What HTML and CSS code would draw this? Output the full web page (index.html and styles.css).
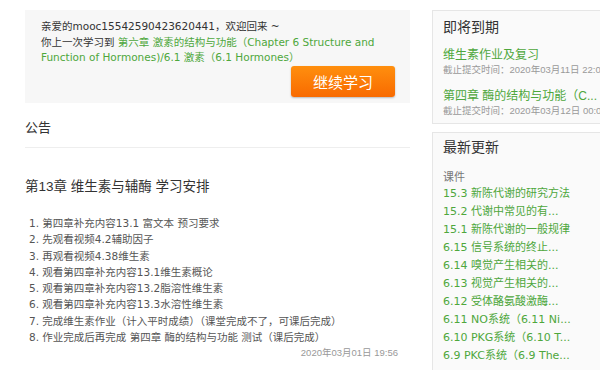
FILE: index.html
```html
<!DOCTYPE html>
<html lang="zh-CN">
<head>
    <meta charset="UTF-8">
    <meta name="viewport" content="width=device-width, initial-scale=1.0">
    <title>课程公告</title>
    <link rel="stylesheet" href="styles.css">
</head>
<body>

    <div class="page">
        <!-- 主栏 -->
        <div class="main">
            <div class="welcome">
                <p class="hello">亲爱的mooc15542590423620441，欢迎回来 ~</p>
                <p class="last">你上一次学习到 <a href="#">第六章 激素的结构与功能（Chapter 6 Structure and Function of Hormones)/6.1 激素（6.1 Hormones）</a></p>
                <button class="continue" type="button">继续学习</button>
            </div>

            <h3 class="section-title">公告</h3>

            <div class="notice">
                <h2>第13章 维生素与辅酶 学习安排</h2>
                <ol class="steps">
                    <li>1. 第四章补充内容13.1 富文本 预习要求</li>
                    <li>2. 先观看视频4.2辅助因子</li>
                    <li>3. 再观看视频4.38维生素</li>
                    <li>4. 观看第四章补充内容13.1维生素概论</li>
                    <li>5. 观看第四章补充内容13.2脂溶性维生素</li>
                    <li>6. 观看第四章补充内容13.3水溶性维生素</li>
                    <li>7. 完成维生素作业（计入平时成绩）（课堂完成不了，可课后完成）</li>
                    <li>8. 作业完成后再完成 第四章 酶的结构与功能 测试（课后完成）</li>
                </ol>
                <div class="date">2020年03月01日 19:56</div>
            </div>
        </div>

        <!-- 侧栏 -->
        <div class="side">
            <div class="box">
                <h4>即将到期</h4>
                <div class="due">
                    <a href="#">维生素作业及复习</a>
                    <span>截止提交时间：2020年03月11日 22:00</span>
                </div>
                <div class="due">
                    <a href="#">第四章 酶的结构与功能（C...</a>
                    <span>截止提交时间：2020年03月12日 00:00</span>
                </div>
            </div>

            <div class="box updates">
                <h4>最新更新</h4>
                <div class="kind">课件</div>
                <ul class="update-list">
                    <li><a href="#">15.3 新陈代谢的研究方法</a></li>
                    <li><a href="#">15.2 代谢中常见的有...</a></li>
                    <li><a href="#">15.1 新陈代谢的一般规律</a></li>
                    <li><a href="#">6.15 信号系统的终止...</a></li>
                    <li><a href="#">6.14 嗅觉产生相关的...</a></li>
                    <li><a href="#">6.13 视觉产生相关的...</a></li>
                    <li><a href="#">6.12 受体酪氨酸激酶...</a></li>
                    <li><a href="#">6.11 NO系统（6.11 Ni...</a></li>
                    <li><a href="#">6.10 PKG系统（6.10 T...</a></li>
                    <li><a href="#">6.9 PKC系统（6.9 The...</a></li>
                </ul>
            </div>
        </div>
    </div>

</body>
</html>
```

FILE: styles.css
```css
/* 基本样式 */
body {
    margin: 0;
    font-family: "Liberation Sans", "Noto Sans CJK SC", sans-serif;
    color: #333;
    background: #fff;
    overflow: hidden;
}

a {
    color: #4ea73c; /* 绿色链接 */
    text-decoration: none;
}

p, h2, h3, h4, ol, ul {
    margin: 0;
    padding: 0;
}

.page {
    display: flex;
    gap: 22px;
    padding: 10px 0 0 25px;
}

/* 主栏 */
.main {
    width: 385px;
    flex-shrink: 0;
}

.welcome {
    display: flex;
    flex-direction: column;
    background: #f7f7f7;
    padding: 7px 15px 6px 16px;
    font-family: "DejaVu Sans", "Noto Sans CJK SC", sans-serif;
    font-size: 10.5px;
}

.welcome .hello {
    line-height: 18px;
}

.welcome .last {
    line-height: 15px;
}

.continue {
    align-self: flex-end;
    width: 104px;
    height: 31px;
    margin-top: 1px;
    border: none;
    border-radius: 3px;
    background: linear-gradient(#ff8f0e, #f86a00);
    box-shadow: 0 1px 2px rgba(0, 0, 0, 0.25);
    color: #fff;
    font-family: "Liberation Sans", "Noto Sans CJK SC", sans-serif;
    font-size: 15px;
    cursor: pointer;
}

.section-title {
    margin-top: 18px;
    padding-bottom: 12px;
    border-bottom: 1px solid #eee;
    font-size: 13px;
    font-weight: normal;
    line-height: 14px;
}

.notice {
    padding-right: 12px;
}

.notice h2 {
    margin-top: 29px;
    font-size: 13.5px;
    font-weight: normal;
    line-height: 20px;
    color: #333;
}

.steps {
    list-style: none;
    margin-top: 18px;
    padding-left: 4px;
    font-family: "DejaVu Sans", "Noto Sans CJK SC", sans-serif;
    font-size: 10.5px;
    line-height: 16.3px;
    color: #555;
}

.date {
    margin-top: 1px;
    text-align: right;
    font-size: 9.5px;
    line-height: 14px;
    color: #999;
}

/* 侧栏 */
.side {
    width: 200px;
    flex-shrink: 0;
}

.box {
    background: #fafafa;
    border: 1px solid #e6e6e6;
    padding: 6px 10px 5px 10px;
    white-space: nowrap;
}

.box h4 {
    font-size: 14px;
    font-weight: normal;
    line-height: 20px;
    color: #333;
}

.due {
    margin-top: 10px;
}

.due:last-child {
    margin-top: 11px;
}

.due a {
    display: block;
    font-size: 12px;
    line-height: 16px;
}

.due span {
    display: block;
    font-size: 9.5px;
    line-height: 14px;
    color: #999;
}

.updates {
    margin-top: 8px;
    padding-top: 4px;
    padding-bottom: 20px;
}

.kind {
    margin-top: 12px;
    font-size: 11px;
    line-height: 16px;
    color: #777;
}

.update-list {
    list-style: none;
    font-family: "DejaVu Sans", "Noto Sans CJK SC", sans-serif;
    font-size: 11px;
}

.update-list a {
    display: block;
    height: 18px;
    line-height: 18px;
}
```
